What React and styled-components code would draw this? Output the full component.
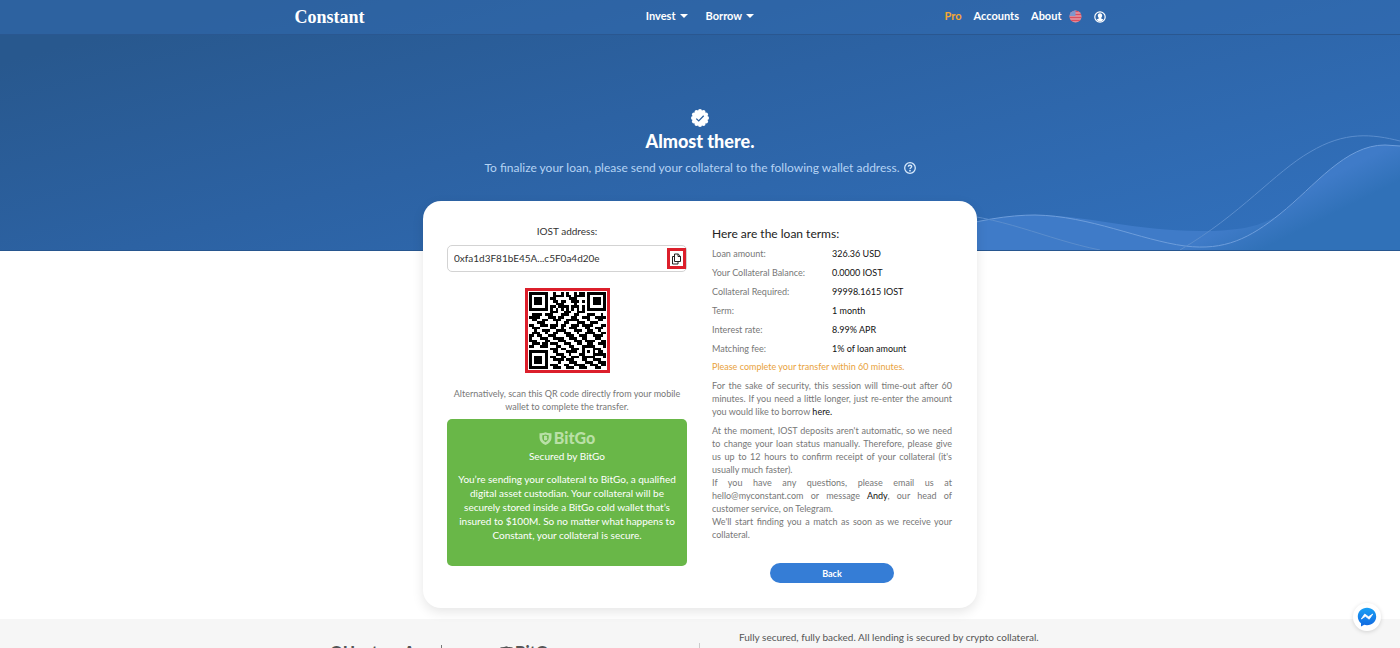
import styled, { createGlobalStyle } from "styled-components";

const GlobalStyle = createGlobalStyle`
    * {
        box-sizing: border-box;
    }
    body {
        margin: 0;
        background: #fff;
        color: #222;
        font-family: Lato, "Liberation Sans", sans-serif;
        font-size: 9px;
        line-height: 13px;
    }
    h1, h2, p, dl, dd {
        margin: 0;
    }
    a {
        color: inherit;
        text-decoration: none;
    }
`;

const QR_ROWS = [
    "11111110010010100101101111111",
    "10000010011110110111101000001",
    "10111010110000011100001011101",
    "10111010011011001110101011101",
    "10111010001110000100001011101",
    "10000010110111101110101000001",
    "11111110101010101010101111111",
    "00000000111001110011100000000",
    "01111011100011100110001110010",
    "11110001110110001100111001111",
    "01100110011100111110001000110",
    "00011100001001100011100111000",
    "11001110111011001110111100011",
    "01110000110010011100011001110",
    "00100111001111000111001100100",
    "01110010011001110010011110011",
    "11011001110000111001110011110",
    "10001110011110011100110001100",
    "11100011000111000111011110011",
    "01110110111001110011001100111",
    "11001110001100011000111110001",
    "00000000111011001110100011100",
    "11111110011000111100101010110",
    "10000010001110010001100011111",
    "10111010110011001110111110001",
    "10111010011110111000110011100",
    "10111010000100011100011100111",
    "10000010111001100111100111011",
    "11111110011100111001110001100",
];

const TERMS = [
    { label: "Loan amount:", value: "326.36 USD" },
    { label: "Your Collateral Balance:", value: "0.0000 IOST" },
    { label: "Collateral Required:", value: "99998.1615 IOST" },
    { label: "Term:", value: "1 month" },
    { label: "Interest rate:", value: "8.99% APR" },
    { label: "Matching fee:", value: "1% of loan amount" },
];

const Page = styled.div`
    position: relative;
    height: 100vh;
    overflow: hidden;
`;

const Top = styled.div`
    position: relative;
    height: 251px;
    background: linear-gradient(165deg, #28588e 10%, #2c62a3 45%, #316fba 90%);
    border-bottom: 1px solid #27568f;
`;

const Header = styled.header`
    height: 35px;
    background: rgba(50, 108, 178, 0.5);
    border-bottom: 1px solid #2a5790;
`;

const HeaderInner = styled.div`
    display: grid;
    grid-template-columns: 1fr auto 1fr;
    align-items: center;
    max-width: 811px;
    height: 33px;
    margin: 0 auto;
    color: #fff;
`;

const Brand = styled.a`
    font-family: "Liberation Serif", serif;
    font-size: 18px;
    font-weight: 700;
    line-height: 20px;
`;

const Nav = styled.nav`
    display: flex;
    align-items: center;
    justify-content: ${({ $end }) => ($end ? "flex-end" : "center")};
    gap: ${({ $end }) => ($end ? "12px" : "18px")};
`;

const NavLink = styled.a`
    display: flex;
    align-items: center;
    gap: 4px;
    padding-bottom: 2px;
    color: ${({ $pro }) => ($pro ? "#f5a833" : "#fff")};
    font-size: 11px;
    font-weight: 700;
    line-height: 16px;
`;

const Account = styled.div`
    display: flex;
    align-items: center;
    gap: 7px;
`;

const Caret = styled.span`
    border: 4px solid transparent;
    border-top-color: #fff;
    border-bottom: 0;
`;

const IconButton = styled.button`
    display: flex;
    padding: 0;
    border: 0;
    background: none;
    color: inherit;
    cursor: pointer;
`;

const Hero = styled.section`
    position: relative;
    display: flex;
    flex-direction: column;
    align-items: center;
    padding-top: 74px;
`;

const Title = styled.h1`
    margin-top: 3px;
    color: #fff;
    font-size: 18px;
    font-weight: 900;
    line-height: 22px;
`;

const Subtitle = styled.p`
    display: flex;
    align-items: center;
    gap: 4px;
    margin-top: 8px;
    color: #b5d3f4;
    font-size: 12px;
    line-height: 16px;
`;

const Waves = styled.svg`
    position: absolute;
    right: 0;
    bottom: 0;
`;

const Card = styled.main`
    position: relative;
    display: grid;
    grid-template-columns: 240px 240px;
    gap: 25px;
    width: 554px;
    margin: -50px auto 11px;
    padding: 24px 24px 25px;
    border-radius: 18px;
    background: #fff;
    box-shadow: 0 4px 12px rgba(0, 0, 0, 0.1);
`;

const Column = styled.section`
    display: flex;
    flex-direction: column;
`;

const AddressLabel = styled.label`
    color: #333;
    font-size: 10px;
    text-align: center;
`;

const AddressBox = styled.div`
    display: flex;
    align-items: center;
    height: 27px;
    margin-top: 7px;
    border: 1px solid #d3d3d3;
    border-radius: 5px;
`;

const AddressInput = styled.input`
    flex: 1;
    min-width: 0;
    padding: 0 6px;
    border: 0;
    outline: 0;
    background: none;
    color: #333;
    font: inherit;
    font-size: 10px;
`;

const CopyButton = styled(IconButton)`
    align-items: center;
    justify-content: center;
    width: 19px;
    height: 21px;
    border: 3px solid #dc1f2b;
    color: #222;
`;

const QrCode = styled.svg`
    align-self: center;
    width: 85px;
    height: 85px;
    margin: 16px 0 14px;
    padding: 1px;
    border: 3px solid #dc1f2b;
`;

const Hint = styled.p`
    color: #777;
    text-align: center;
`;

const Secured = styled.div`
    display: flex;
    flex-direction: column;
    align-items: center;
    height: 147px;
    margin-top: 6px;
    padding: 11px 8px;
    border-radius: 5px;
    background: #69b748;
    color: #fff;
    font-size: 10px;
    line-height: 14px;
    text-align: center;
`;

const BitGoLogo = styled.span`
    display: flex;
    align-items: center;
    gap: 2px;
    color: ${({ $color }) => $color};
    font-size: 16px;
    font-weight: 900;
    line-height: 16px;
`;

const SecuredTitle = styled.p`
    margin: 3px 0 9px;
`;

const TermsTitle = styled.h2`
    margin-top: 1px;
    color: #222;
    font-size: 12px;
    font-weight: 400;
    line-height: 16px;
`;

const Terms = styled.dl`
    display: grid;
    grid-template-columns: 120px 1fr;
    row-gap: 6px;
    margin: 5px 0;
    color: #777;
`;

const TermValue = styled.dd`
    color: #111;
`;

const Notice = styled.p`
    color: #e9a23b;
`;

const Note = styled.p`
    margin-top: 6px;
    color: #777;
    text-align: justify;

    & a {
        color: #111;
    }
`;

const BackButton = styled.button`
    align-self: center;
    width: 124px;
    height: 20px;
    margin-top: 22px;
    padding: 0;
    border: 0;
    border-radius: 10px;
    background: #357dd6;
    color: #fff;
    font: inherit;
    font-weight: 700;
    cursor: pointer;
`;

const Footer = styled.footer`
    height: 120px;
    background: #f6f6f6;
`;

const FooterInner = styled.div`
    display: grid;
    grid-template-columns: 369px 1px 1fr;
    max-width: 740px;
    height: 100%;
    margin: 0 auto;
`;

const Partners = styled.div`
    display: flex;
    align-items: flex-start;
    gap: 26px;
    padding-top: 23px;
    color: #555;
    font-size: 16px;
    font-weight: 900;
    line-height: 20px;

    & ${BitGoLogo} {
        margin-left: 32px;
        line-height: 20px;
    }
`;

const Divider = styled.span`
    width: 1px;
    height: ${({ $short }) => ($short ? "16px" : "60px")};
    margin-top: ${({ $short }) => ($short ? "3px" : "24px")};
    background: ${({ $short }) => ($short ? "#777" : "#ccc")};
`;

const FooterText = styled.p`
    padding: 12px 0 0 39px;
    color: #555;
    font-size: 10px;
`;

const ChatButton = styled(IconButton)`
    position: fixed;
    right: 19px;
    bottom: 17px;
    align-items: center;
    justify-content: center;
    width: 28px;
    height: 28px;
    border-radius: 50%;
    background: #fff;
    box-shadow: 0 1px 4px rgba(0, 0, 0, 0.15);
`;

const FlagIcon = () => (
    <svg width="13" height="13" viewBox="0 0 13 13" aria-hidden="true">
        <clipPath id="flag">
            <circle cx="6.5" cy="6.5" r="6" />
        </clipPath>
        <g clipPath="url(#flag)">
            <rect width="13" height="13" fill="#e59aa6" />
            <path d="M0 1.5h13M0 4.5h13M0 7.5h13M0 10.5h13" stroke="#d94f5f" strokeWidth="1.6" />
            <rect width="6.5" height="6" fill="#7d97cc" />
        </g>
    </svg>
);

const UserIcon = () => (
    <svg width="12" height="12" viewBox="0 0 12 12" aria-hidden="true">
        <circle cx="6" cy="6" r="5.2" fill="none" stroke="#fff" strokeWidth="1.2" />
        <path d="M6 2.2c1.5 0 2.2 1 2.2 2.3 0 1-.5 1.9-1 2.3v.8l2.2 1C8.5 9.9 7.4 10.6 6 10.6S3.5 9.9 2.6 8.6l2.2-1v-.8c-.5-.4-1-1.3-1-2.3C3.8 3.2 4.5 2.2 6 2.2z" fill="#fff" />
    </svg>
);

const scallops = Array.from({ length: 12 }, (_, i) => {
    const angle = (i * Math.PI) / 6;
    return { cx: 9 + 7 * Math.cos(angle), cy: 9 + 7 * Math.sin(angle) };
});

const BadgeIcon = () => (
    <svg width="18" height="18" viewBox="0 0 18 18" aria-hidden="true">
        <g fill="#fff">
            <circle cx="9" cy="9" r="7.6" />
            {scallops.map(({ cx, cy }, i) => (
                <circle key={i} cx={cx} cy={cy} r="2" />
            ))}
        </g>
        <path d="M5.3 9.6l2.4 2.3 5-5.2" fill="none" stroke="#2b5f9e" strokeWidth="1.3" />
    </svg>
);

const HelpIcon = () => (
    <svg width="12" height="12" viewBox="0 0 12 12" fill="none" stroke="#d6e8fb" aria-hidden="true">
        <circle cx="6" cy="6" r="5.3" strokeWidth="1.3" />
        <path d="M4.3 4.8c0-1 .7-1.6 1.7-1.6s1.7.6 1.7 1.4c0 1.1-1.7 1.2-1.7 2.4" strokeWidth="1.4" />
        <circle cx="6" cy="8.7" r=".9" fill="#d6e8fb" stroke="none" />
    </svg>
);

const CopyIcon = () => (
    <svg width="11" height="12" viewBox="0 0 11 12" fill="none" stroke="currentColor" aria-hidden="true">
        <path d="M3.5 1h3.7l2.3 2.3v5.2h-6z" />
        <path d="M7 1v2.5h2.5" />
        <path d="M3.5 3.5h-2v7.5h5.5V8.5" />
    </svg>
);

const ShieldIcon = ({ cutout }) => (
    <svg width="13" height="13" viewBox="0 0 13 13" aria-hidden="true">
        <path d="M.5 1.2C2.6 1.4 4.6 1.1 6.5.2c1.9.9 3.9 1.2 6 1v4.6c0 3.4-2.3 5.7-6 7.2C2.8 11.5.5 9.2.5 5.8z" fill="currentColor" />
        <path d="M3.3 3.2c1.2 0 2.2-.2 3.2-.7 1 .5 2 .7 3.2.7v2.6c0 2-1.2 3.4-3.2 4.4-2-1-3.2-2.4-3.2-4.4z" fill={cutout} />
        <path d="M5 3.8h1.9c1.5 0 1.7 1.7.7 2 1.3.3 1.1 2.5-.6 2.5H5z" fill="currentColor" />
    </svg>
);

const MessengerIcon = () => (
    <svg width="20" height="20" viewBox="0 0 20 20" aria-hidden="true">
        <linearGradient id="chat" x1="0" y1="0" x2="0" y2="1">
            <stop offset="0" stopColor="#1aa0f5" />
            <stop offset="1" stopColor="#1268e0" />
        </linearGradient>
        <path d="M10 .8c5.2 0 9.2 3.8 9.2 8.7s-4 8.7-9.2 8.7c-1 0-1.900-.1-2.700-.4L4 19.500v-3.200C2 14.700.8 12.300.8 9.500.8 4.600 4.800.8 10 .8z" fill="url(#chat)" />
        <path d="M4.300 12l3.400-5 3.800 2.800L15.800 7l-3.600 5.200-3.800-2.900z" fill="#fff" stroke="#fff" strokeWidth=".8" strokeLinejoin="round" />
    </svg>
);

const WaveLines = () => (
    <Waves width="460" height="130" viewBox="940 120 460 130" fill="none" aria-hidden="true">
        <linearGradient id="wave" gradientUnits="userSpaceOnUse" x1="1290" y1="170" x2="1325" y2="240">
            <stop offset="0.3" stopColor="#3f7bc8" />
            <stop offset="0.75" stopColor="#3071b8" />
        </linearGradient>
        <path
            d="M940 232C975 220 1010 215 1035 215c50 0 100 16 165 16 40 0 60-4 82-18 33-26 62-68 103-68l15 1v104H940z"
            fill="url(#wave)"
        />
        <path
            d="M940 232C975 220 1010 215 1035 215c55 1 105 25 150 31 40 5 65-8 95-32 35-28 65-69 105-69l15 1"
            stroke="#6d9ddb"
        />
        <path
            d="M940 213c60 2 105 26 160 37M1180 250c60-35 95-78 130-98 35-21 62-18 90-11"
            stroke="#5a8dcd"
        />
    </Waves>
);

const qrPath = QR_ROWS.map((row, y) =>
    [...row].map((cell, x) => (cell === "1" ? `M${x} ${y}h1v1h-1z` : "")).join("")
).join("");

const BitGo = ({ color, cutout }) => (
    <BitGoLogo $color={color}>
        <ShieldIcon cutout={cutout} />
        BitGo
    </BitGoLogo>
);

const TopBar = () => (
    <Header>
        <HeaderInner>
            <Brand href="#">Constant</Brand>
            <Nav>
                <NavLink href="#">Invest <Caret /></NavLink>
                <NavLink href="#">Borrow <Caret /></NavLink>
            </Nav>
            <Nav $end>
                <NavLink href="#" $pro>Pro</NavLink>
                <NavLink href="#">Accounts</NavLink>
                <Account>
                    <NavLink href="#">About</NavLink>
                    <IconButton aria-label="Language"><FlagIcon /></IconButton>
                </Account>
                <IconButton aria-label="Profile"><UserIcon /></IconButton>
            </Nav>
        </HeaderInner>
    </Header>
);

const Deposit = () => (
    <Column>
        <AddressLabel htmlFor="address">IOST address:</AddressLabel>
        <AddressBox>
            <AddressInput id="address" readOnly defaultValue="0xfa1d3F81bE45A...c5F0a4d20e" />
            <CopyButton aria-label="Copy address"><CopyIcon /></CopyButton>
        </AddressBox>
        <QrCode viewBox="0 0 29 29" role="img" aria-label="QR code">
            <path d={qrPath} fill="#000" shapeRendering="crispEdges" />
        </QrCode>
        <Hint>Alternatively, scan this QR code directly from your mobile wallet to complete the transfer.</Hint>
        <Secured>
            <BitGo color="#b9e0a6" cutout="#69b748" />
            <SecuredTitle>Secured by BitGo</SecuredTitle>
            <p>
                You’re sending your collateral to BitGo, a qualified digital asset custodian. Your
                collateral will be securely stored inside a BitGo cold wallet that’s insured to $100M.
                So no matter what happens to Constant, your collateral is secure.
            </p>
        </Secured>
    </Column>
);

const LoanTerms = () => (
    <Column>
        <TermsTitle>Here are the loan terms:</TermsTitle>
        <Terms>
            {TERMS.map(({ label, value }) => [
                <dt key={label}>{label}</dt>,
                <TermValue key={value}>{value}</TermValue>,
            ])}
        </Terms>
        <Notice>Please complete your transfer within 60 minutes.</Notice>
        <Note>
            For the sake of security, this session will time-out after 60 minutes. If you need a
            little longer, just re-enter the amount you would like to borrow <a href="#">here.</a>
        </Note>
        <Note>
            At the moment, IOST deposits aren't automatic, so we need to change your loan status
            manually. Therefore, please give us up to 12 hours to confirm receipt of your collateral
            (it's usually much faster).
            <br />
            If you have any questions, please email us at hello@myconstant.com or message{" "}
            <a href="#">Andy</a>, our head of customer service, on Telegram.
            <br />
            We'll start finding you a match as soon as we receive your collateral.
        </Note>
        <BackButton>Back</BackButton>
    </Column>
);

const App = () => (
    <Page>
        <GlobalStyle />
        <Top>
            <WaveLines />
            <TopBar />
            <Hero>
                <BadgeIcon />
                <Title>Almost there.</Title>
                <Subtitle>
                    To finalize your loan, please send your collateral to the following wallet address.
                    <HelpIcon />
                </Subtitle>
            </Hero>
        </Top>
        <Card>
            <Deposit />
            <LoanTerms />
        </Card>
        <Footer>
            <FooterInner>
                <Partners>
                    <span>QUant</span>
                    <span>A</span>
                    <Divider $short />
                    <BitGo color="#555" cutout="#f6f6f6" />
                </Partners>
                <Divider />
                <FooterText>Fully secured, fully backed. All lending is secured by crypto collateral.</FooterText>
            </FooterInner>
        </Footer>
        <ChatButton aria-label="Open chat"><MessengerIcon /></ChatButton>
    </Page>
);

export default App;
